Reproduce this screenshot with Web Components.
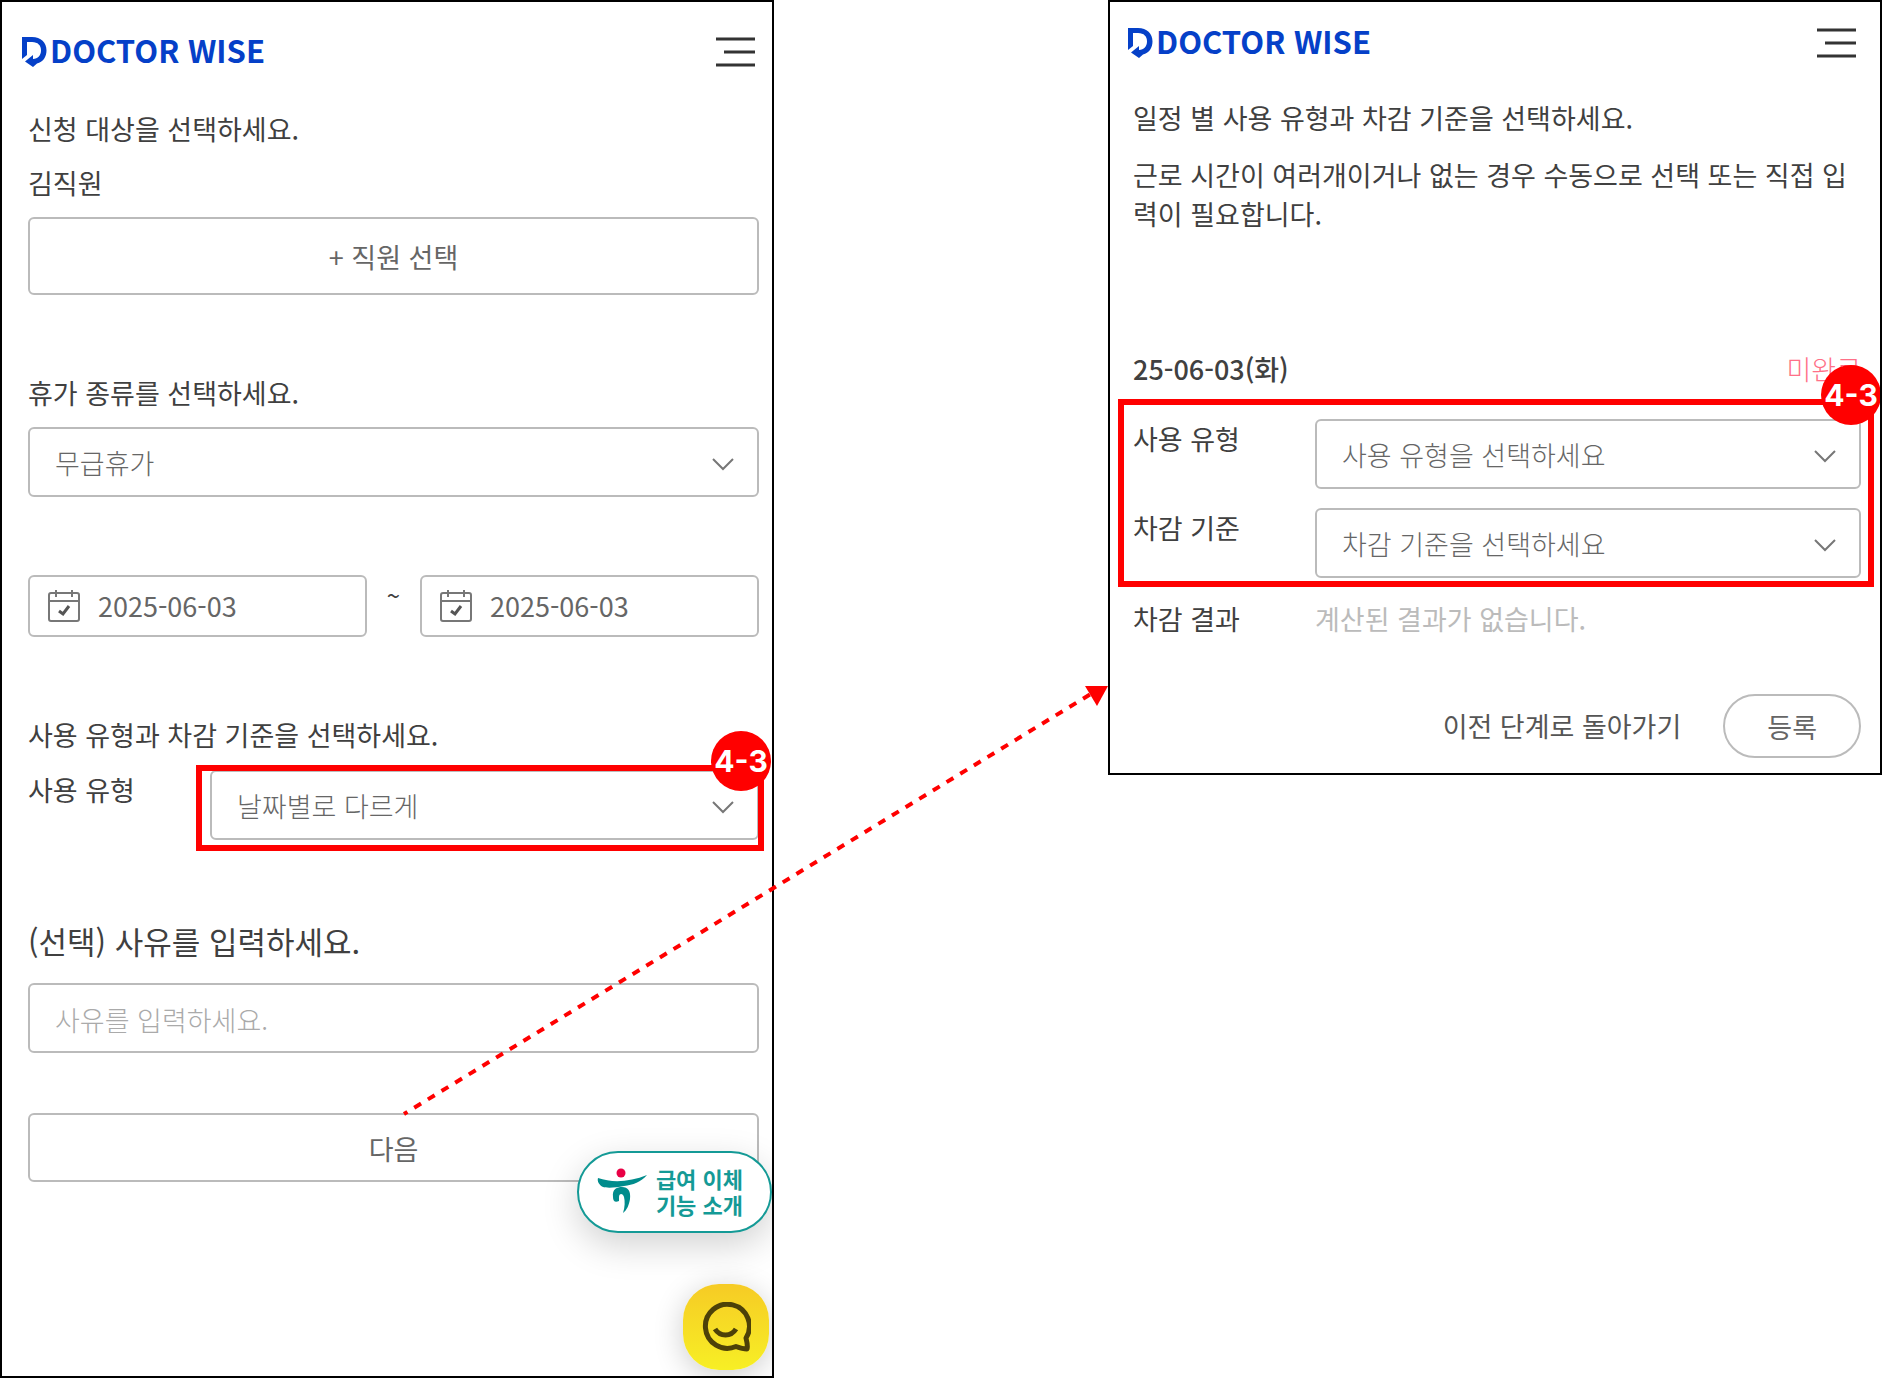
<!DOCTYPE html>
<html lang="ko">
<head>
<meta charset="utf-8">
<meta name="viewport" content="width=device-width, initial-scale=1">
<title>DOCTOR WISE</title>
<style>
  body {
    margin: 0;
    background: #fff;
    color: #404040;
    font: 27px/40px "Noto Sans CJK KR", "Noto Sans", sans-serif;
  }
</style>
</head>
<body>
<flow-board>
  <request-screen slot="from"></request-screen>
  <schedule-screen slot="to"></schedule-screen>
</flow-board>

<script>
/* board: two screens and the arrow between them */
class FlowBoard extends HTMLElement {
  constructor() {
    super();
    this.attachShadow({ mode: "open" }).innerHTML = `
<style>
  :host {
    display: grid;
    grid-template-columns: minmax(0, 774fr) minmax(0, 334fr) minmax(0, 774fr);
    min-height: 100vh;
    position: relative;
  }
  slot[name="to"]::slotted(*) {
    grid-column: 3;
    align-self: start;
  }
  svg {
    position: absolute;
    top: 0;
    left: 0;
    width: 100%;
    pointer-events: none;
  }
</style>
<slot name="from"></slot>
<slot name="to"></slot>
<svg viewBox="0 0 1882 1200" aria-hidden="true">
  <path d="M404 1114 1094 692" fill="none" stroke="#f00" stroke-width="4" stroke-dasharray="8 8" stroke-dashoffset="4"/>
  <path d="M1085 686h23l-11 20z" fill="#f00"/>
</svg>`;
  }
}

/* outlined phone screen: header + content + floating buttons */
class PhoneScreen extends HTMLElement {
  constructor() {
    super();
    this.attachShadow({ mode: "open" }).innerHTML = `
<style>
  :host {
    display: block;
    box-sizing: border-box;
    height: 100%;
    border: 2px solid #000;
    background: #fff;
    position: relative;
    overflow: hidden;
  }
  main {
    padding: var(--body-pad);
  }
</style>
<brand-header></brand-header>
<main><slot></slot></main>
<slot name="floating"></slot>`;
  }
}

class BrandHeader extends HTMLElement {
  constructor() {
    super();
    this.attachShadow({ mode: "open" }).innerHTML = `
<style>
  :host {
    display: flex;
    align-items: center;
    justify-content: space-between;
    height: var(--header-height);
    padding: var(--header-pad);
  }
  a {
    display: flex;
    align-items: center;
    gap: 3px;
    color: #0540c8;
    font-size: 31px;
    font-weight: 700;
    text-decoration: none;
  }
  span { padding-bottom: 5px; }
  button {
    border: 0;
    padding: 0;
    background: none;
  }
  svg { display: block; }
</style>
<a href="#"><svg width="25" height="30" viewBox="0 0 25 30" aria-hidden="true">
  <path d="M0 0H10C19 0 24.500 5.500 24.500 13.500C24.500 20 21 25 15 26.500L11 30L3 24.500L11 18V22C16 21.500 19 18.500 19 13.500C19 8.500 16 5 10 5H5V18L0 22Z" fill="currentColor"/>
</svg><span>DOCTOR WISE</span></a>
<button type="button" aria-label="메뉴"><svg width="40" height="30" viewBox="0 0 40 30">
  <path d="M0 2H39M8 15H39M0 28H39" stroke="#333" stroke-width="3"/>
</svg></button>`;
  }
}

/* label + select, stacked or on one row */
class PickField extends HTMLElement {
  constructor() {
    super();
    this.attachShadow({ mode: "open" }).innerHTML = `
<style>
  :host {
    display: grid;
    row-gap: 14px;
  }
  :host([row]) {
    grid-template-columns: 182px 1fr;
    align-items: start;
  }
  .box {
    display: grid;
    align-items: center;
  }
  select, svg { grid-area: 1 / 1; }
  select {
    appearance: none;
    box-sizing: border-box;
    width: 100%;
    height: 70px;
    padding: 2px 60px 0 25px;
    border: 2px solid #bbb;
    border-radius: 6px;
    background: #fff;
    color: #666;
    font: inherit;
    font-weight: 300;
  }
  svg {
    justify-self: end;
    margin: 4px 24px 0 0;
    pointer-events: none;
  }
</style>
<label for="pick">${this.getAttribute("label")}</label>
<div class="box">
  <select id="pick"><option>${this.getAttribute("value")}</option></select>
  <svg width="24" height="14" viewBox="0 0 24 14" aria-hidden="true">
    <path d="M2 2 12 12 22 2" fill="none" stroke="#777" stroke-width="2"/>
  </svg>
</div>`;
  }
}

class DateField extends HTMLElement {
  constructor() {
    super();
    this.attachShadow({ mode: "open" }).innerHTML = `
<style>
  :host {
    display: flex;
    align-items: center;
    gap: 17px;
    box-sizing: border-box;
    height: 62px;
    padding: 0 17px;
    border: 2px solid #bbb;
    border-radius: 6px;
  }
  input {
    flex: 1;
    min-width: 0;
    border: 0;
    padding: 0;
    background: none;
    color: #666;
    font: inherit;
  }
</style>
<svg width="34" height="34" viewBox="0 0 34 34" aria-hidden="true">
  <g fill="none" stroke="#777" stroke-width="2">
    <rect x="2" y="4" width="30" height="28" rx="2"/>
    <path d="M2 12H32M9 1V8M25 1V8"/>
    <path d="M12 22 16 25 22 17" stroke="#555" stroke-width="3"/>
  </g>
</svg>
<input type="text" aria-label="${this.getAttribute("label")}" value="${this.getAttribute("value")}">`;
  }
}

class TextField extends HTMLElement {
  constructor() {
    super();
    this.attachShadow({ mode: "open" }).innerHTML = `
<style>
  :host {
    display: grid;
    row-gap: 19px;
  }
  label {
    font-size: 31px;
    line-height: 46px;
  }
  input {
    box-sizing: border-box;
    width: 100%;
    height: 70px;
    padding: 2px 25px 0;
    border: 2px solid #bbb;
    border-radius: 6px;
    color: #555;
    font: inherit;
    font-weight: 300;
  }
  input::placeholder { color: #aaa; }
</style>
<label for="text">${this.getAttribute("label")}</label>
<input id="text" type="text" placeholder="${this.getAttribute("placeholder")}">`;
  }
}

class LineButton extends HTMLElement {
  constructor() {
    super();
    this.attachShadow({ mode: "open" }).innerHTML = `
<style>
  :host { display: block; }
  button {
    box-sizing: border-box;
    width: 100%;
    height: var(--button-height, 69px);
    padding: 2px 42px 0;
    border: 2px solid #bbb;
    border-radius: var(--button-radius, 6px);
    background: #fff;
    color: #666;
    font: inherit;
  }
</style>
<button type="button"><slot></slot></button>`;
  }
}

/* red frame with a numbered badge, laid over what it wraps */
class MarkBox extends HTMLElement {
  constructor() {
    super();
    this.attachShadow({ mode: "open" }).innerHTML = `
<style>
  :host {
    display: block;
    position: relative;
  }
  .frame {
    position: absolute;
    inset: var(--frame);
    border: 6px solid #f00;
    pointer-events: none;
  }
  .badge {
    position: absolute;
    top: -40px;
    right: -13px;
    width: 60px;
    height: 60px;
    border-radius: 50%;
    background: #f00;
    color: #fff;
    font: 700 30px/60px Inter, sans-serif;
    text-align: center;
  }
</style>
<slot></slot>
<div class="frame"><span class="badge">${this.getAttribute("number")}</span></div>`;
  }
}

class BankPill extends HTMLElement {
  constructor() {
    super();
    this.attachShadow({ mode: "open" }).innerHTML = `
<style>
  :host { display: block; }
  a {
    display: flex;
    align-items: center;
    gap: 9px;
    box-sizing: border-box;
    height: 82px;
    padding: 0 27px 2px 18px;
    border: 2px solid #149a96;
    border-radius: 41px;
    background: #fff;
    box-shadow: 0 12px 36px rgba(0, 0, 0, .18);
    color: #149a96;
    font-size: 22px;
    font-weight: 700;
    line-height: 26px;
    text-decoration: none;
  }
</style>
<a href="#"><svg width="50" height="46" viewBox="0 0 50 46" aria-hidden="true">
  <circle cx="24" cy="5" r="4.500" fill="#e90045"/>
  <g fill="#008c8c">
    <path d="M1 10C15 15 33 14 50 7C44 14 36 17 27 18C18 20 9 20 6 19C2 17 0 13 1 10Z"/>
    <path d="M16 29C15 21 20 19 25 19C31 19 34 23 33 31C32 37 30 42 26 45C28 39 28 33 27 29C26 25 22 25 22 29V33C18 35 16 33 16 29Z"/>
  </g>
</svg><span>급여 이체<br>기능 소개</span></a>`;
  }
}

class ChatButton extends HTMLElement {
  constructor() {
    super();
    this.attachShadow({ mode: "open" }).innerHTML = `
<style>
  :host { display: block; }
  button {
    display: grid;
    place-items: center;
    width: 86px;
    height: 86px;
    padding: 0;
    border: 0;
    border-radius: 36px;
    background: linear-gradient(#f6cb25, #f7ef25);
    box-shadow: 0 6px 30px rgba(0, 0, 0, .2);
  }
</style>
<button type="button" aria-label="채팅 상담"><svg width="50" height="50" viewBox="0 0 50 50" fill="none" stroke="#4d4108" stroke-width="5">
  <path d="M45 36A22 22 0 1 0 35 44.500C39 46 42 47 46 47C47 44 46 40 45 36Z" stroke-linejoin="round"/>
  <path d="M14 27C19 35 30 35 35 27"/>
</svg></button>`;
  }
}

/* left screen: leave request */
class RequestScreen extends HTMLElement {
  constructor() {
    super();
    this.attachShadow({ mode: "open" }).innerHTML = `
<style>
  :host { display: block; }
  phone-screen {
    --header-height: 100px;
    --header-pad: 0 16px 0 20px;
    --body-pad: 7px 13px 0 26px;
  }
  p { margin: 0; }
  section { margin-bottom: 78px; }
  .people {
    display: grid;
    gap: 14px;
  }
  .people line-button { --button-height: 78px; }
  .dates {
    display: grid;
    grid-template-columns: minmax(0, 1fr) 53px minmax(0, 1fr);
    align-items: start;
  }
  .dates span {
    font-size: 24px;
    text-align: center;
  }
  .use {
    display: grid;
    gap: 15px;
  }
  mark-box { --frame: -5px -5px -11px 168px; }
  .reason { margin-bottom: 60px; }
  .floating {
    position: absolute;
    right: 0;
    bottom: 6px;
    display: grid;
    justify-items: end;
    gap: 51px;
  }
  chat-button { margin-right: 3px; }
</style>
<phone-screen>
  <section class="people">
    <p>신청 대상을 선택하세요.</p>
    <p>김직원</p>
    <line-button>+ 직원 선택</line-button>
  </section>
  <section>
    <pick-field label="휴가 종류를 선택하세요." value="무급휴가"></pick-field>
  </section>
  <section class="dates">
    <date-field label="시작일" value="2025-06-03"></date-field>
    <span>~</span>
    <date-field label="종료일" value="2025-06-03"></date-field>
  </section>
  <section class="use">
    <p>사용 유형과 차감 기준을 선택하세요.</p>
    <mark-box number="4-3">
      <pick-field row label="사용 유형" value="날짜별로 다르게"></pick-field>
    </mark-box>
  </section>
  <section class="reason">
    <text-field label="(선택) 사유를 입력하세요." placeholder="사유를 입력하세요."></text-field>
  </section>
  <line-button>다음</line-button>
  <div class="floating" slot="floating">
    <bank-pill></bank-pill>
    <chat-button></chat-button>
  </div>
</phone-screen>`;
  }
}

/* right screen: type per date */
class ScheduleScreen extends HTMLElement {
  constructor() {
    super();
    this.attachShadow({ mode: "open" }).innerHTML = `
<style>
  :host { display: block; }
  phone-screen {
    --header-height: 82px;
    --header-pad: 0 23px 0 18px;
    --body-pad: 14px 19px 15px 23px;
  }
  p {
    margin: 0 0 18px;
    line-height: 39px;
  }
  .day {
    display: flex;
    justify-content: space-between;
    margin: 116px 0 30px;
  }
  .day strong { font-weight: 500; }
  .day span {
    color: #ff7088;
    font-weight: 300;
  }
  mark-box { --frame: -20px -13px -9px -15px; }
  .fields {
    display: grid;
    gap: 19px;
  }
  dl {
    display: grid;
    grid-template-columns: 182px 1fr;
    margin: 21px 0 55px;
  }
  dd {
    margin: 0;
    color: #bbb;
  }
  footer {
    display: flex;
    align-items: center;
    justify-content: flex-end;
    gap: 42px;
  }
  footer a {
    color: #555;
    text-decoration: none;
  }
  footer line-button {
    --button-height: 64px;
    --button-radius: 32px;
  }
</style>
<phone-screen>
  <p>일정 별 사용 유형과 차감 기준을 선택하세요.</p>
  <p>근로 시간이 여러개이거나 없는 경우 수동으로 선택 또는 직접 입력이 필요합니다.</p>
  <div class="day"><strong>25-06-03(화)</strong><span>미완료</span></div>
  <mark-box number="4-3">
    <div class="fields">
      <pick-field row label="사용 유형" value="사용 유형을 선택하세요"></pick-field>
      <pick-field row label="차감 기준" value="차감 기준을 선택하세요"></pick-field>
    </div>
  </mark-box>
  <dl><dt>차감 결과</dt><dd>계산된 결과가 없습니다.</dd></dl>
  <footer>
    <a href="#">이전 단계로 돌아가기</a>
    <line-button>등록</line-button>
  </footer>
</phone-screen>`;
  }
}

customElements.define("flow-board", FlowBoard);
customElements.define("phone-screen", PhoneScreen);
customElements.define("brand-header", BrandHeader);
customElements.define("pick-field", PickField);
customElements.define("date-field", DateField);
customElements.define("text-field", TextField);
customElements.define("line-button", LineButton);
customElements.define("mark-box", MarkBox);
customElements.define("bank-pill", BankPill);
customElements.define("chat-button", ChatButton);
customElements.define("request-screen", RequestScreen);
customElements.define("schedule-screen", ScheduleScreen);
</script>
</body>
</html>
